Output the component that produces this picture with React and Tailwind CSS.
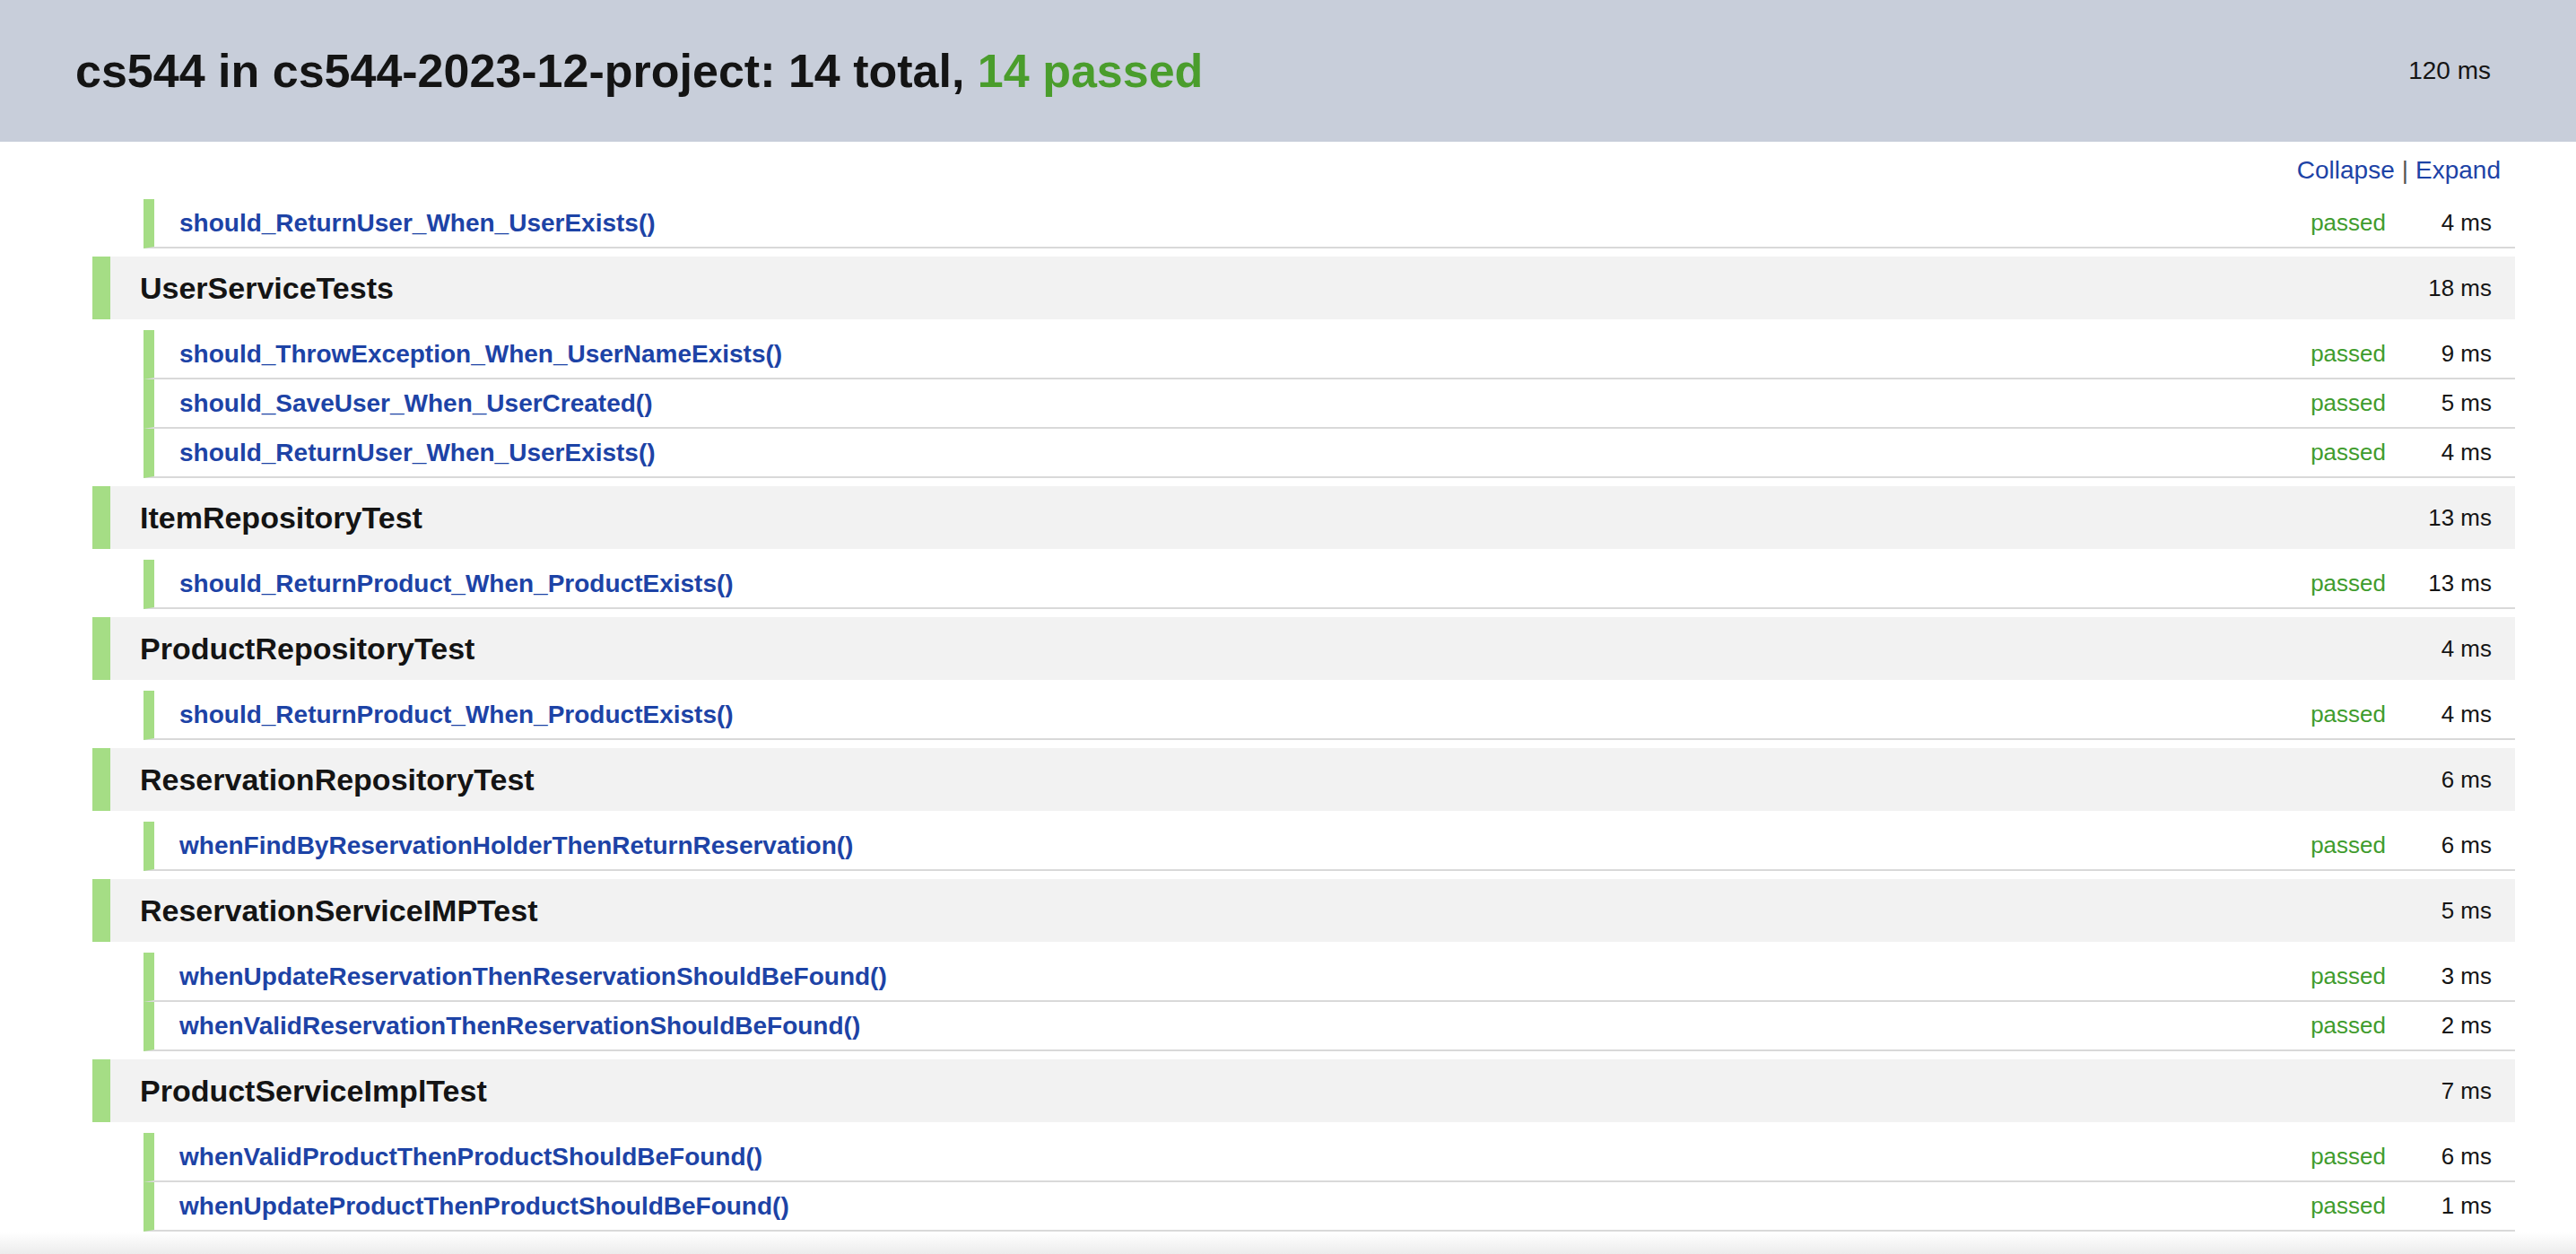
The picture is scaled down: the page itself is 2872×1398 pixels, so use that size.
const suites = [
  {
    name: null,
    tests: [{ name: "should_ReturnUser_When_UserExists()", time: "4 ms" }],
  },
  {
    name: "UserServiceTests",
    time: "18 ms",
    tests: [
      { name: "should_ThrowException_When_UserNameExists()", time: "9 ms" },
      { name: "should_SaveUser_When_UserCreated()", time: "5 ms" },
      { name: "should_ReturnUser_When_UserExists()", time: "4 ms" },
    ],
  },
  {
    name: "ItemRepositoryTest",
    time: "13 ms",
    tests: [{ name: "should_ReturnProduct_When_ProductExists()", time: "13 ms" }],
  },
  {
    name: "ProductRepositoryTest",
    time: "4 ms",
    tests: [{ name: "should_ReturnProduct_When_ProductExists()", time: "4 ms" }],
  },
  {
    name: "ReservationRepositoryTest",
    time: "6 ms",
    tests: [{ name: "whenFindByReservationHolderThenReturnReservation()", time: "6 ms" }],
  },
  {
    name: "ReservationServiceIMPTest",
    time: "5 ms",
    tests: [
      { name: "whenUpdateReservationThenReservationShouldBeFound()", time: "3 ms" },
      { name: "whenValidReservationThenReservationShouldBeFound()", time: "2 ms" },
    ],
  },
  {
    name: "ProductServiceImplTest",
    time: "7 ms",
    tests: [
      { name: "whenValidProductThenProductShouldBeFound()", time: "6 ms" },
      { name: "whenUpdateProductThenProductShouldBeFound()", time: "1 ms" },
    ],
  },
];

function TestRow({ name, time, first }) {
  return (
    <div
      className={[
        "ml-[57px] flex h-[55px] items-center border-b-2 border-l-[12px] border-b-[#d9d9d9] border-l-[#a5dd85] bg-white",
        first ? "mt-[12px]" : "",
      ].join(" ")}
    >
      <span className="flex-1 pl-[28px] text-[28px] font-bold text-[#1d43a6]">
        {name}
      </span>
      <span className="text-[26px] text-[#3f9c2d]">passed</span>
      <span className="w-[144px] pr-[26px] text-right text-[26px] text-[#151515]">
        {time}
      </span>
    </div>
  );
}

function SuiteHeader({ name, time }) {
  return (
    <div className="mt-[9px] flex h-[70px] items-center border-l-[20px] border-l-[#a5dd85] bg-[#f2f2f2]">
      <span className="flex-1 pl-[33px] text-[34px] font-bold text-[#141414]">
        {name}
      </span>
      <span className="pr-[26px] text-[26px] text-[#151515]">{time}</span>
    </div>
  );
}

function App() {
  return (
    <div className="relative min-h-screen overflow-hidden bg-white font-['Liberation_Sans',Arial,sans-serif]">
      <header className="flex h-[158px] items-center justify-between bg-[#c8ceda] pl-[84px] pr-[95px]">
        <h1 className="text-[52px] font-bold text-[#141414]">
          cs544 in cs544-2023-12-project: 14 total,{" "}
          <span className="text-[#4a9d2c]">14 passed</span>
        </h1>
        <span className="text-[28px] text-[#151515]">120 ms</span>
      </header>

      <div className="mt-[16px] flex justify-end pr-[84px] text-[28px] leading-[32px]">
        <a className="text-[#1d43a6]">Collapse</a>
        <span className="px-[8px] text-[#555]">|</span>
        <a className="text-[#1d43a6]">Expand</a>
      </div>

      <div className="ml-[103px] mr-[68px] mt-[16px]">
        {suites.map((suite, i) => (
          <div key={i}>
            {suite.name && <SuiteHeader name={suite.name} time={suite.time} />}
            {suite.tests.map((test, j) => (
              <TestRow key={j} {...test} first={j === 0 && suite.name !== null} />
            ))}
          </div>
        ))}
      </div>

      <div className="pointer-events-none absolute bottom-0 left-0 h-[24px] w-full bg-gradient-to-b from-white to-[#ececec]" />
    </div>
  );
}

export default App;
